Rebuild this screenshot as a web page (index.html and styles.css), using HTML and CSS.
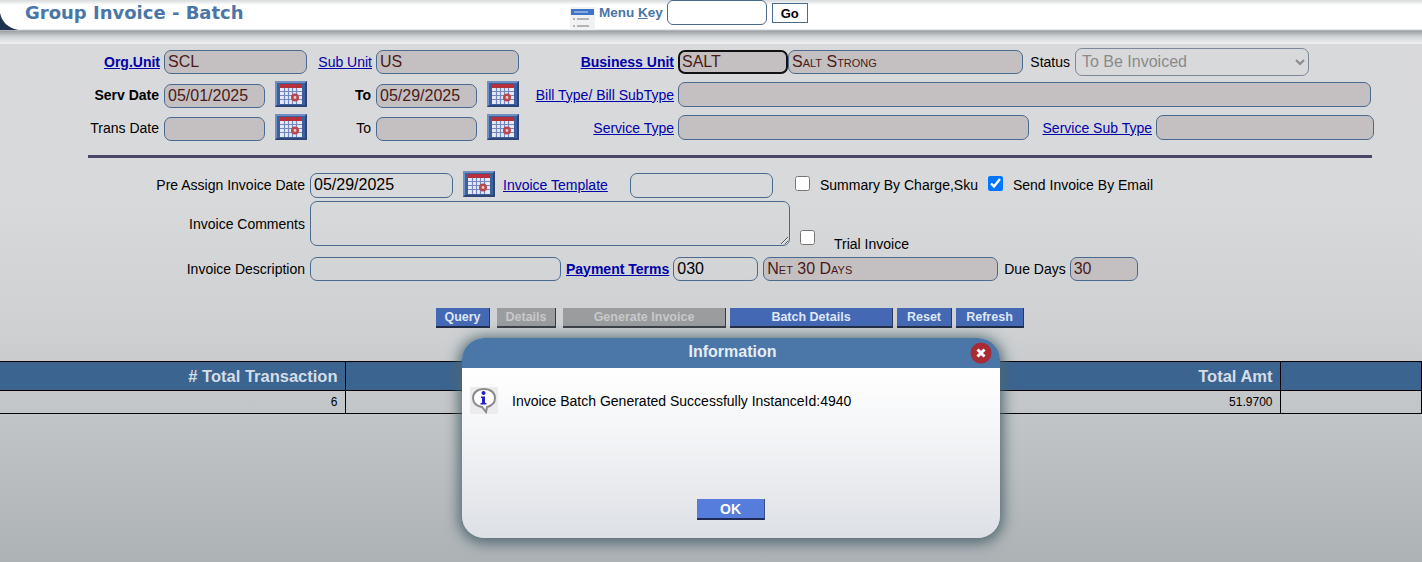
FILE: index.html
```html
<!DOCTYPE html>
<html lang="en">
<head>
  <meta charset="UTF-8" />
  <title>Group Invoice - Batch</title>
  <link rel="stylesheet" href="styles.css">
</head>
<body>
  <svg class="defs" width="0" height="0">
    <symbol id="cal" viewBox="0 0 32 26">
      <rect width="32" height="26" fill="#3f5f9c"/>
      <path d="M0 0h32l-2 2H2v22l-2 2z" fill="#6f8fc4"/>
      <path d="M32 26H0l2-2h28V2l2-2z" fill="#2c4476"/>
      <rect x="5" y="3" width="22" height="20" fill="#e6e8f2"/>
      <rect x="5" y="3" width="22" height="4" fill="#b5303a"/>
      <path d="M5 10.500h22M5 14.500h22M5 18.500h22M9.500 7v16M13.500 7v16M17.500 7v16M21.500 7v16" stroke="#7388c0" stroke-width="1.200"/>
      <circle cx="20" cy="16.500" r="4" fill="#b8474e"/>
      <circle cx="20" cy="16.500" r="1.400" fill="#e6c8cc"/>
    </symbol>
  </svg>

  <div class="header">
    <svg class="corner" width="18" height="17" viewBox="0 0 18 17"><path d="M0 0C2 9 8 15 18 17H0z" fill="#1d3350"/></svg>
    <h1 class="page-title">Group Invoice - Batch</h1>
    <svg class="menu-icon" width="25" height="23" viewBox="0 0 25 23">
      <rect width="25" height="23" fill="#f1f2f4"/>
      <rect x="1" y="2" width="23" height="6" fill="#3f73c8"/>
      <path d="M4 5h14" stroke="#cfe0f5"/>
      <path d="M3 12h2M7 12h12M3 19h2M7 19h12" stroke="#777"/>
    </svg>
    <label class="menu-key">Menu <u>K</u>ey</label>
    <input class="menu-input" type="text">
    <button class="go-btn" type="button">Go</button>
  </div>

  <form class="filters">
    <a class="lbl strong" href="#">Org.Unit</a>
    <input class="fld ro span-2" type="text" value="SCL" readonly>
    <a class="lbl" href="#">Sub Unit</a>
    <input class="fld ro span-2" type="text" value="US" readonly>
    <a class="lbl strong" href="#">Business Unit</a>
    <input class="fld ro focus" type="text" value="SALT" readonly>
    <input class="fld ro caps name" type="text" value="Salt Strong" readonly>
    <label class="lbl plain">Status</label>
    <select class="status span-2" disabled><option>To Be Invoiced</option></select>

    <label class="lbl plain strong row-2">Serv Date</label>
    <input class="fld ro date" type="text" value="05/01/2025" readonly>
    <svg class="cal"><use href="#cal"/></svg>
    <label class="lbl plain strong">To</label>
    <input class="fld ro date" type="text" value="05/29/2025" readonly>
    <svg class="cal"><use href="#cal"/></svg>
    <a class="lbl" href="#">Bill Type/ Bill SubType</a>
    <input class="fld ro wide tall" type="text" readonly>

    <label class="lbl plain row-3">Trans Date</label>
    <input class="fld ro date" type="text" readonly>
    <svg class="cal"><use href="#cal"/></svg>
    <label class="lbl plain">To</label>
    <input class="fld ro date" type="text" readonly>
    <svg class="cal"><use href="#cal"/></svg>
    <a class="lbl" href="#">Service Type</a>
    <input class="fld ro span-2 tall" type="text" readonly>
    <a class="lbl span-2" href="#">Service Sub Type</a>
    <input class="fld ro span-2 tall" type="text" readonly>
  </form>

  <hr class="rule">

  <form class="invoice">
    <div class="inv-row first">
      <label class="inv-lbl">Pre Assign Invoice Date</label>
      <input class="fld w143" type="text" value="05/29/2025">
      <svg class="cal cal-inv"><use href="#cal"/></svg>
      <a class="tpl-link" href="#">Invoice Template</a>
      <input class="fld w143 tpl" type="text">
      <input class="chk chk-summary" type="checkbox">
      <label class="chk-lbl">Summary By Charge,Sku</label>
      <input class="chk chk-email" type="checkbox" checked>
      <label class="chk-lbl">Send Invoice By Email</label>
    </div>
    <div class="inv-row second">
      <label class="inv-lbl">Invoice Comments</label>
      <textarea class="comments"></textarea>
      <input class="chk chk-trial" type="checkbox">
      <label class="chk-lbl trial">Trial Invoice</label>
    </div>
    <div class="inv-row third">
      <label class="inv-lbl">Invoice Description</label>
      <input class="fld w251" type="text">
      <a class="terms-link" href="#">Payment Terms</a>
      <input class="fld w85" type="text" value="030">
      <input class="fld ro caps w235" type="text" value="Net 30 Days" readonly>
      <label class="due-lbl">Due Days</label>
      <input class="fld ro w68" type="text" value="30" readonly>
    </div>
  </form>

  <div class="actions">
    <button class="btn w54" type="button">Query</button>
    <button class="btn off w59" type="button">Details</button>
    <button class="btn off w163" type="button">Generate Invoice</button>
    <button class="btn w163 near" type="button">Batch Details</button>
    <button class="btn w55 near" type="button">Reset</button>
    <button class="btn w68 near" type="button">Refresh</button>
  </div>

  <table class="totals">
    <thead>
      <tr><th class="c-count"># Total Transaction</th><th class="c-mid"></th><th class="c-amt">Total Amt</th><th></th></tr>
    </thead>
    <tbody>
      <tr><td>6</td><td></td><td>51.9700</td><td></td></tr>
    </tbody>
  </table>

  <div class="modal">
    <div class="modal-head">
      <span>Information</span>
      <svg class="modal-close" width="22" height="22" viewBox="0 0 22 22">
        <circle cx="11" cy="11" r="10.500" fill="#a92b33"/>
        <path d="M7.500 7.500l7 7M14.500 7.500l-7 7" stroke="#fff" stroke-width="3"/>
      </svg>
    </div>
    <div class="modal-body">
      <div class="modal-msg">
        <svg class="info-icon" width="28" height="27" viewBox="0 0 28 27">
          <rect width="28" height="27" fill="#ececee"/>
          <path d="M14 2c7 0 11 4 11 9 0 5-4 8-8 9l-1 5-4-5C7 19 3 16 3 11c0-5 4-9 11-9z" fill="#fff" stroke="#8c8c90" stroke-width="2"/>
          <circle cx="13.500" cy="6" r="2" fill="#2222c8"/>
          <path d="M11 9.500h4v6.500h1.500v1.500h-6V16H12v-5h-1z" fill="#2222c8"/>
        </svg>
        <span>Invoice Batch Generated Successfully InstanceId:4940</span>
      </div>
      <button class="ok-btn" type="button">OK</button>
    </div>
  </div>
</body>
</html>
```

FILE: styles.css
```css
* { box-sizing: border-box; }
html, body { height: 100%; }
body {
  margin: 0; overflow: hidden; position: relative;
  font-family: "Liberation Sans", Arial, sans-serif; font-size: 14px; color: #000;
  background: linear-gradient(#d9d9db 0, #d8d9da 200px, #ced0d2 330px, #adb2b5 562px);
}
.defs { position: absolute; }
a { color: #0000a8; }

/* top bar */
.header {
  height: 44px; display: flex; align-items: flex-start; position: relative;
  background: linear-gradient(#d8dadb 0, #fff 5px, #fff 29px, #9aa0a4 31px, #d2d5d7 37px, #eff0f1 44px);
}
.corner { position: absolute; left: 0; top: 13px; }
.page-title {
  margin: 1px 0 0 25px; width: 545px;
  font: bold 18px "DejaVu Sans", Verdana, sans-serif; line-height: 24px; color: #4a76a6;
}
.menu-icon { margin-top: 7px; }
.menu-key { margin: 5px 0 0 4px; font-weight: bold; font-size: 13.500px; color: #4a76a6; line-height: 16px; }
.menu-input { width: 100px; height: 25px; margin-left: 4px; border: 1px solid #4a6a8f; border-radius: 6px; background: #fff; }
.go-btn {
  width: 36px; height: 20px; margin: 3px 0 0 5px; padding: 0;
  border: 1px solid #4a6a8f; background: #fff; font: bold 13px "Liberation Sans", Arial, sans-serif;
}

/* shared fields */
.fld {
  height: 24px; padding: 0 3px; border: 1px solid #4a6a8f; border-radius: 7px;
  font: 16px "Liberation Sans", Arial, sans-serif; color: #000; background: transparent; outline: none;
}
.ro { background: #c4c0c1; color: #4a1a1a; }
.caps { font-variant: small-caps; }

/* filter block */
.filters {
  display: grid; height: 99px; margin-top: 1px;
  grid-template-columns: 164px 111px 32px 69px 111px 32px 159px 110px 241px 46px 81px 153px 65px;
  grid-auto-rows: 33px; align-items: center;
}
.lbl { text-align: right; padding-right: 4px; }
.plain { padding-right: 5px; }
.strong { font-weight: bold; }
.span-2 { grid-column: span 2; width: 100%; }
.row-2 { grid-column: 1; }
.row-3 { grid-column: 1; }
.date { width: 101px; margin-top: 3px; }
.cal { width: 32px; height: 26px; margin-top: -1px; }
.focus { border: 2px solid #111; width: 110px; padding-left: 2px; }
.name { width: 235px; }
.wide { grid-column: 8 / 14; width: 693px; }
.tall { height: 25px; }
.status {
  height: 28px; width: 234px; padding-left: 2px; border: 1px solid #7a8899; border-radius: 7px;
  font: 16px "Liberation Sans", Arial, sans-serif; color: #8a8a8a; background: transparent; opacity: 1;
}

.rule { height: 3px; margin: 11px 50px 0 88px; border: 0; background: #4a4868; }

/* invoice block */
.invoice { margin-top: 14px; }
.inv-row { display: flex; align-items: center; }
.first { height: 26px; }
.second { height: 45px; margin-top: 3px; }
.third { height: 25px; margin-top: 10px; }
.inv-lbl { width: 305px; margin-right: 5px; text-align: right; }
.w143 { width: 143px; height: 25px; }
.w251 { width: 251px; }
.w85 { width: 85px; margin-left: 4px; }
.w235 { width: 235px; margin-left: 5px; }
.w68 { width: 68px; margin-left: 4px; }
.cal-inv { margin: -3px 0 0 10px; }
.tpl-link { margin-left: 8px; width: 127px; }
.chk { width: 15px; height: 15px; margin: 0; flex: none; }
.chk-summary { margin: -4px 0 0 22px; }
.chk-email { margin: -4px 0 0 10px; }
.chk-trial { margin: 28px 0 0 10px; }
.chk-lbl { margin-left: 10px; }
.chk-lbl.trial { margin: 40px 0 0 19px; }
.comments {
  width: 480px; height: 45px; padding: 2px 3px; border: 1px solid #4a6a8f; border-radius: 7px;
  background: transparent; outline: none;
}
.terms-link { margin-left: 5px; font-weight: bold; }
.due-lbl { margin-left: 6px; }

/* action buttons */
.actions { display: flex; gap: 7px; height: 20px; margin: 27px 0 0 436px; }
.btn {
  height: 20px; padding: 0; border: 0; border-bottom: 2px solid #1f2a44; border-right: 1px solid #2c3a5c;
  background: #4468b4; color: #dfe6f4; font: bold 12.500px "Liberation Sans", Arial, sans-serif;
}
.off { background: #9a9c9e; color: #c8c8ca; border-bottom-color: #3a3e44; }
.near { margin-left: -3px; }
.w54 { width: 54px; }
.w59 { width: 59px; }
.w163 { width: 163px; }
.w55 { width: 55px; }
.w68 { width: 68px; }

/* totals table */
.totals { width: 100%; margin-top: 33px; border-collapse: collapse; table-layout: fixed; }
.totals th, .totals td { border: 1px solid #000; border-left: 0; text-align: right; padding: 0 7px; }
.totals th {
  height: 29px; background: #3b6491; color: #d5dde6; font-size: 16.500px; font-weight: bold;
}
.totals td { height: 23px; font-size: 12px; }
.c-count { width: 345px; }
.c-mid { width: 590px; }
.c-amt { width: 345px; }

/* message box */
.modal {
  position: absolute; left: 462px; top: 338px; width: 538px; height: 200px;
  display: flex; flex-direction: column; overflow: visible;
  border-radius: 22px; box-shadow: 0 2px 14px 3px #4e686f;
}
.modal-head {
  height: 30px; display: flex; align-items: center; justify-content: center; position: relative;
  border-radius: 22px 22px 0 0; background: #4a76a8; color: #e6edf5; font-size: 16px; font-weight: bold;
}
.modal-head span { margin-left: 3px; margin-top: -3px; }
.modal-close { position: absolute; right: 8px; top: 4px; }
.modal-body {
  flex: 1; position: relative; border-radius: 0 0 22px 22px;
  background: linear-gradient(#fff 0, #f5f6f8 60px, #dde0e5 170px);
}
.modal-msg { display: flex; align-items: center; gap: 14px; padding: 19px 0 0 8px; }
.ok-btn {
  position: absolute; left: 235px; top: 131px; width: 68px; height: 21px; padding: 0;
  border: 0; border-bottom: 2px solid #1f2a55; border-right: 1px solid #3a5080;
  background: #567cdc; color: #fff; font: bold 14px "Liberation Sans", Arial, sans-serif;
}
```
